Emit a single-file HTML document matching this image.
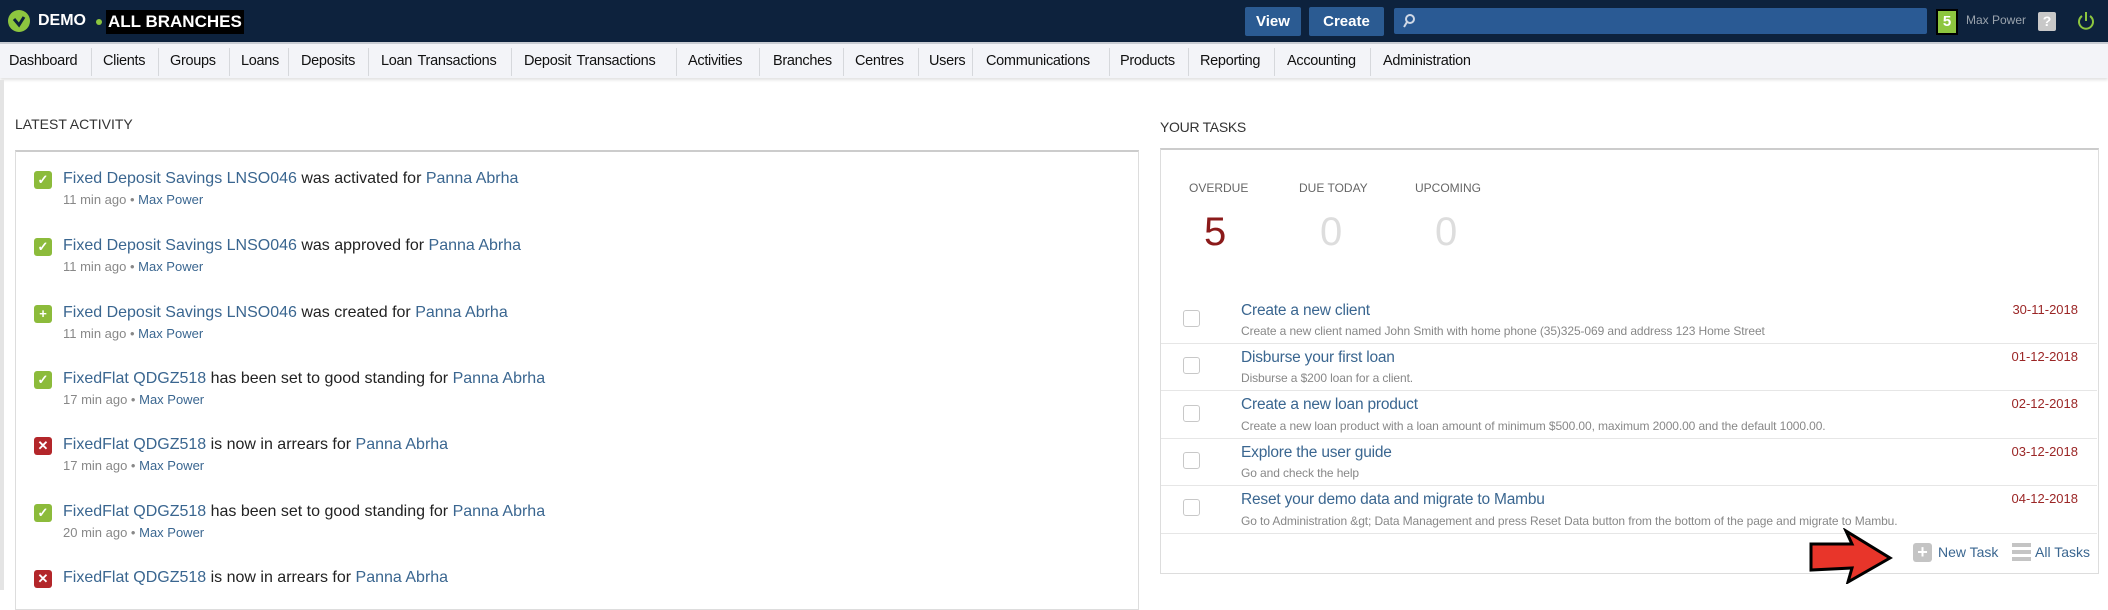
<!DOCTYPE html>
<html><head><meta charset="utf-8"><style>
*{margin:0;padding:0;box-sizing:border-box}
body{width:2108px;height:590px;overflow:hidden;background:#fff;font-family:"Liberation Sans",sans-serif;position:relative}
.a{position:absolute;white-space:nowrap}
#top{position:absolute;left:0;top:0;width:2108px;height:42px;background:#0d223d}
#nav{position:absolute;left:0;top:42px;width:2108px;height:36px;background:#f3f4f8;border-top:2px solid #c8ccd3;box-shadow:0 2px 3px rgba(0,0,0,.12)}
.ni{position:absolute;top:9px;font-size:14.5px;color:#111;letter-spacing:-0.3px}
.ns{position:absolute;top:4px;width:1px;height:28px;background:#d6d8dc}
.btn{position:absolute;top:7px;height:29px;background:#2b5b92;color:#fff;font-weight:bold;font-size:15px;text-align:center;line-height:29px;border-radius:2px}
.lk{color:#3a6690}
.it{position:absolute;left:63px;font-size:16px;color:#222;white-space:nowrap}
.sub{position:absolute;left:63px;font-size:13px;color:#888;white-space:nowrap}
.ic{position:absolute;left:34px;width:18px;height:18px;border-radius:3px;color:#fff;font-size:13px;font-weight:bold;text-align:center;line-height:18px}
.g{background:#8cbb3b}.r{background:#b3262a}
.tt{position:absolute;left:1241px;font-size:15.5px;color:#3a6690;white-space:nowrap;letter-spacing:-0.2px}
.ts{position:absolute;left:1241px;font-size:12px;color:#888;white-space:nowrap;letter-spacing:-0.1px}
.td{position:absolute;right:30px;font-size:13px;color:#9b2626}
.cb{position:absolute;left:1183px;width:17px;height:17px;border:1px solid #c8c8c8;border-radius:3px;background:#fff}
.sep{position:absolute;left:1161px;width:936px;height:1px;background:#e6e6e6}
</style></head><body>
<div id="top"></div>
<div class="a" style="left:8px;top:10px;width:22px;height:22px;border-radius:50%;background:#8dc63f"></div>
<svg class="a" style="left:11px;top:13px" width="16" height="16" viewBox="0 0 16 16"><path d="M3 6 L8 12 L13 4" stroke="#0d223d" stroke-width="3" fill="none"/></svg>
<div class="a" style="left:38px;top:12px;color:#fff;font-weight:bold;font-size:16px">DEMO</div>
<div class="a" style="left:96px;top:19px;width:6px;height:6px;border-radius:50%;background:#8dc63f"></div>
<div class="a" style="left:106px;top:10px;height:24px;background:#000;color:#fff;font-weight:bold;font-size:17px;padding:2px 2px;line-height:20px">ALL BRANCHES</div>
<div class="btn" style="left:1245px;width:56px">View</div>
<div class="btn" style="left:1309px;width:75px">Create</div>
<div class="a" style="left:1394px;top:8px;width:533px;height:26px;background:#2a5a94;border-radius:2px"></div>
<svg class="a" style="left:1402px;top:13px" width="14" height="16" viewBox="0 0 14 16"><circle cx="8" cy="6" r="4" stroke="#cfd8e6" stroke-width="2" fill="none"/><path d="M5 9 L2 14" stroke="#cfd8e6" stroke-width="2"/></svg>
<div class="a" style="left:1936px;top:9px;width:22px;height:26px;background:#8dc63f;border:2px solid #000;color:#fff;font-weight:bold;font-size:15px;text-align:center;line-height:22px">5</div>
<div class="a" style="left:1966px;top:13px;color:#9aa3ad;font-size:12px">Max Power</div>
<div class="a" style="left:2038px;top:12px;width:18px;height:19px;background:#c8c8c8;border-radius:2px;color:#fff;font-weight:bold;font-size:14px;text-align:center;line-height:19px">?</div>
<svg class="a" style="left:2077px;top:10px" width="18" height="22" viewBox="0 0 18 22"><path d="M5 6 A7 7 0 1 0 13 6" stroke="#8dc63f" stroke-width="2" fill="none"/><path d="M9 2 V11" stroke="#8dc63f" stroke-width="2"/></svg>

<div id="nav">
<span class="ni" style="left:9px">Dashboard</span><div class="ns" style="left:91px"></div>
<span class="ni" style="left:103px">Clients</span><div class="ns" style="left:158px"></div>
<span class="ni" style="left:170px">Groups</span><div class="ns" style="left:229px"></div>
<span class="ni" style="left:241px">Loans</span><div class="ns" style="left:288px"></div>
<span class="ni" style="left:301px">Deposits</span><div class="ns" style="left:368px"></div>
<span class="ni" style="left:381px;word-spacing:2px">Loan Transactions</span><div class="ns" style="left:511px"></div>
<span class="ni" style="left:524px;word-spacing:2px">Deposit Transactions</span><div class="ns" style="left:676px"></div>
<span class="ni" style="left:688px">Activities</span><div class="ns" style="left:759px"></div>
<span class="ni" style="left:773px">Branches</span><div class="ns" style="left:843px"></div>
<span class="ni" style="left:855px">Centres</span><div class="ns" style="left:918px"></div>
<span class="ni" style="left:929px">Users</span><div class="ns" style="left:972px"></div>
<span class="ni" style="left:986px">Communications</span><div class="ns" style="left:1109px"></div>
<span class="ni" style="left:1120px">Products</span><div class="ns" style="left:1188px"></div>
<span class="ni" style="left:1200px">Reporting</span><div class="ns" style="left:1274px"></div>
<span class="ni" style="left:1287px">Accounting</span><div class="ns" style="left:1370px"></div>
<span class="ni" style="left:1383px">Administration</span>
</div>

<div class="a" style="left:0;top:80px;width:4px;height:510px;background:#e4e4e4"></div>
<div class="a" style="left:15px;top:116px;color:#333;font-size:14px">LATEST ACTIVITY</div>
<div class="a" style="left:15px;top:150px;width:1124px;height:460px;border:1px solid #ddd;border-top:2px solid #ccc"></div>

<div class="ic g" style="top:171px">✓</div><div class="it" style="top:170px"><span class="lk">Fixed Deposit Savings LNSO046</span> was activated for <span class="lk">Panna Abrha</span></div>
<div class="sub" style="top:192px">11 min ago • <span class="lk">Max Power</span></div>
<div class="ic g" style="top:238px">✓</div><div class="it" style="top:237px"><span class="lk">Fixed Deposit Savings LNSO046</span> was approved for <span class="lk">Panna Abrha</span></div>
<div class="sub" style="top:259px">11 min ago • <span class="lk">Max Power</span></div>
<div class="ic g" style="top:305px">+</div><div class="it" style="top:304px"><span class="lk">Fixed Deposit Savings LNSO046</span> was created for <span class="lk">Panna Abrha</span></div>
<div class="sub" style="top:326px">11 min ago • <span class="lk">Max Power</span></div>
<div class="ic g" style="top:371px">✓</div><div class="it" style="top:370px"><span class="lk">FixedFlat QDGZ518</span> has been set to good standing for <span class="lk">Panna Abrha</span></div>
<div class="sub" style="top:392px">17 min ago • <span class="lk">Max Power</span></div>
<div class="ic r" style="top:437px">✕</div><div class="it" style="top:436px"><span class="lk">FixedFlat QDGZ518</span> is now in arrears for <span class="lk">Panna Abrha</span></div>
<div class="sub" style="top:458px">17 min ago • <span class="lk">Max Power</span></div>
<div class="ic g" style="top:504px">✓</div><div class="it" style="top:503px"><span class="lk">FixedFlat QDGZ518</span> has been set to good standing for <span class="lk">Panna Abrha</span></div>
<div class="sub" style="top:525px">20 min ago • <span class="lk">Max Power</span></div>
<div class="ic r" style="top:570px">✕</div><div class="it" style="top:569px"><span class="lk">FixedFlat QDGZ518</span> is now in arrears for <span class="lk">Panna Abrha</span></div>

<div class="a" style="left:1160px;top:119px;color:#333;font-size:14px;letter-spacing:-0.3px">YOUR TASKS</div>
<div class="a" style="left:1160px;top:148px;width:939px;height:426px;border:1px solid #ddd;border-top:2px solid #ccc"></div>
<div class="a" style="left:1189px;top:181px;color:#666;font-size:12px">OVERDUE</div>
<div class="a" style="left:1299px;top:181px;color:#666;font-size:12px">DUE TODAY</div>
<div class="a" style="left:1415px;top:181px;color:#666;font-size:12px">UPCOMING</div>
<div class="a" style="left:1204px;top:210px;color:#8b1a1a;font-size:40px">5</div>
<div class="a" style="left:1320px;top:210px;color:#ddd;font-size:40px">0</div>
<div class="a" style="left:1435px;top:210px;color:#ddd;font-size:40px">0</div>

<div class="cb" style="top:310px"></div><div class="tt" style="top:302px">Create a new client</div><div class="ts" style="top:324px">Create a new client named John Smith with home phone (35)325-069 and address 123 Home Street</div><div class="td" style="top:302px">30-11-2018</div>
<div class="sep" style="top:343px"></div>
<div class="cb" style="top:357px"></div><div class="tt" style="top:349px">Disburse your first loan</div><div class="ts" style="top:371px">Disburse a $200 loan for a client.</div><div class="td" style="top:349px">01-12-2018</div>
<div class="sep" style="top:390px"></div>
<div class="cb" style="top:405px"></div><div class="tt" style="top:396px">Create a new loan product</div><div class="ts" style="top:419px">Create a new loan product with a loan amount of minimum $500.00, maximum 2000.00 and the default 1000.00.</div><div class="td" style="top:396px">02-12-2018</div>
<div class="sep" style="top:438px"></div>
<div class="cb" style="top:452px"></div><div class="tt" style="top:444px">Explore the user guide</div><div class="ts" style="top:466px">Go and check the help</div><div class="td" style="top:444px">03-12-2018</div>
<div class="sep" style="top:485px"></div>
<div class="cb" style="top:499px"></div><div class="tt" style="top:491px">Reset your demo data and migrate to Mambu</div><div class="ts" style="top:514px">Go to Administration &amp;gt; Data Management and press Reset Data button from the bottom of the page and migrate to Mambu.</div><div class="td" style="top:491px">04-12-2018</div>
<div class="sep" style="top:533px"></div>

<svg class="a" style="left:1808px;top:528px" width="86" height="56" viewBox="0 0 86 56"><path d="M3 16 L44 16 L38 3 L82 30 L40 54 L44 40 L3 42 Z" fill="#e8352a" stroke="#000" stroke-width="3" stroke-linejoin="miter"/></svg>
<div class="a" style="left:1913px;top:543px;width:19px;height:19px;background:#c4c4c4;border-radius:3px;color:#fff;font-weight:bold;font-size:18px;text-align:center;line-height:19px">+</div>
<div class="a" style="left:1938px;top:544px;color:#3a6690;font-size:14px">New Task</div>
<div class="a" style="left:2012px;top:543px;width:19px;height:4px;background:#c4c4c4"></div>
<div class="a" style="left:2012px;top:550px;width:19px;height:4px;background:#c4c4c4"></div>
<div class="a" style="left:2012px;top:557px;width:19px;height:4px;background:#c4c4c4"></div>
<div class="a" style="left:2035px;top:544px;color:#3a6690;font-size:14px">All Tasks</div>
</body></html>
